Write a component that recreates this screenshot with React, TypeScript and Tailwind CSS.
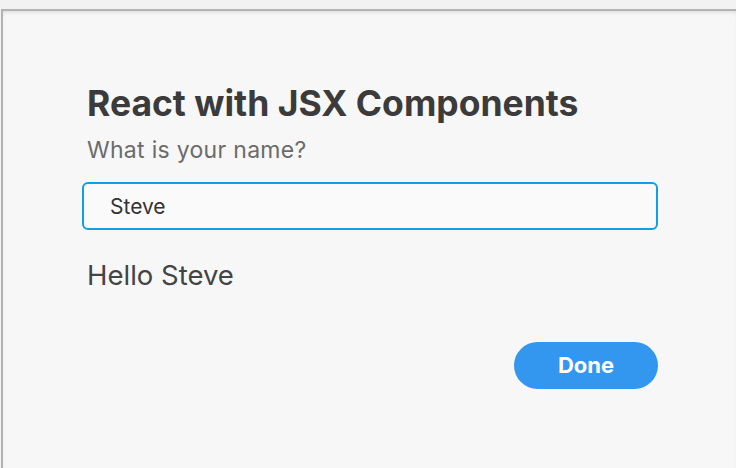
import React, { useState } from 'react';

const App: React.FC = () => {
  const [name, setName] = useState('Steve');

  return (
    <div className="w-[736px] h-[468px] bg-[#f2f2f2] pt-[9px] pl-px overflow-hidden" style={{ fontFamily: 'Inter, "Liberation Sans", Arial, sans-serif' }}>
      {/* Window frame */}
      <div className="h-full bg-[#f7f7f7] border-t-2 border-l-2 border-[#b3b3b3] shadow-[inset_0_3px_4px_-2px_rgba(0,0,0,0.12)]">
        <div className="pl-[84px] pr-[76px] pt-[73px]">
          <h1 className="text-[35.5px] leading-[40px] font-bold text-[#3b3b3b]">React with JSX Components</h1>
          <p className="mt-[12px] text-[23px] leading-[28px] tracking-[0.3px] text-[#6b6b6b]">What is your name?</p>

          <input
            value={name}
            onChange={(e) => setName(e.target.value)}
            className="mt-[18px] -ml-[5px] w-[576px] h-[48px] rounded-[6px] border-2 border-[#0ea0e6] bg-[#fafafa] pl-[26px] text-[21px] text-[#333] outline-none"
          />

          <p className="mt-[29px] text-[27.5px] leading-[32px] text-[#444]">Hello {name}</p>

          <div className="flex justify-end mt-[51px] mr-[2px]">
            <button className="w-[144px] h-[47px] rounded-full bg-[#3397ef] text-white text-[22px] font-bold">
              Done
            </button>
          </div>
        </div>
      </div>
    </div>
  );
};

export default App;
